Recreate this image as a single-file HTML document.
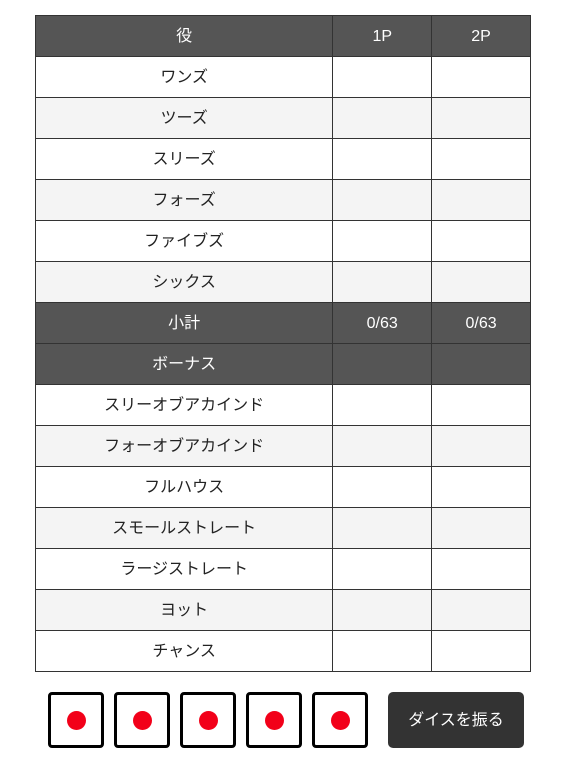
<!DOCTYPE html>
<html><head><meta charset="utf-8"><style>
body{margin:0;background:#fff;font-family:"Liberation Sans","Noto Sans CJK JP",sans-serif;}
table{position:absolute;left:35px;top:15px;border-collapse:collapse;width:496px;}
td{border:1px solid #333;height:40px;padding:0;font-size:16px;color:#222;}
td div{height:38px;padding-top:2px;display:flex;align-items:center;justify-content:center;line-height:1;}
tr:nth-child(odd) td{background:#f4f4f4}
tr:nth-child(even) td{background:#fff}
tr.h td{background:#555;color:#fff;}
.d{position:absolute;top:692px;width:50px;height:50px;border:3px solid #000;border-radius:4px;background:#fff}
.d i{position:absolute;left:15.5px;top:15.5px;width:19px;height:19px;border-radius:50%;background:#f20019}
.b{position:absolute;left:388px;top:692px;width:136px;height:54px;padding-top:2px;background:#333;border-radius:5px;color:#fff;font-size:16px;display:flex;align-items:center;justify-content:center;line-height:1}
</style></head><body>
<table>
<colgroup><col style="width:298px"><col style="width:99px"><col style="width:99px"></colgroup>
<tr class="h"><td><div>役</div></td><td><div>1P</div></td><td><div>2P</div></td></tr>
<tr><td><div>ワンズ</div></td><td></td><td></td></tr>
<tr><td><div>ツーズ</div></td><td></td><td></td></tr>
<tr><td><div>スリーズ</div></td><td></td><td></td></tr>
<tr><td><div>フォーズ</div></td><td></td><td></td></tr>
<tr><td><div>ファイブズ</div></td><td></td><td></td></tr>
<tr><td><div>シックス</div></td><td></td><td></td></tr>
<tr class="h"><td><div>小計</div></td><td><div>0/63</div></td><td><div>0/63</div></td></tr>
<tr class="h"><td><div>ボーナス</div></td><td></td><td></td></tr>
<tr><td><div>スリーオブアカインド</div></td><td></td><td></td></tr>
<tr><td><div>フォーオブアカインド</div></td><td></td><td></td></tr>
<tr><td><div>フルハウス</div></td><td></td><td></td></tr>
<tr><td><div>スモールストレート</div></td><td></td><td></td></tr>
<tr><td><div>ラージストレート</div></td><td></td><td></td></tr>
<tr><td><div>ヨット</div></td><td></td><td></td></tr>
<tr><td><div>チャンス</div></td><td></td><td></td></tr>
</table>
<div class="d" style="left:48px"><i></i></div>
<div class="d" style="left:114px"><i></i></div>
<div class="d" style="left:180px"><i></i></div>
<div class="d" style="left:246px"><i></i></div>
<div class="d" style="left:312px"><i></i></div>
<div class="b">ダイスを振る</div>
</body></html>
